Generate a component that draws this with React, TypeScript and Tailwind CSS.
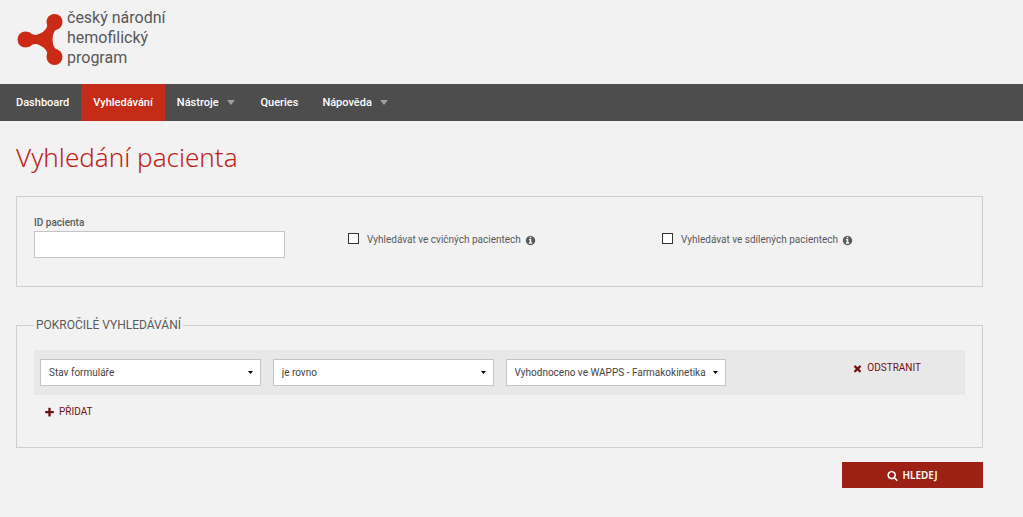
import React, { useState } from 'react';

const ICONS = {
  plus: 'M1600 736v192q0 40-28 68t-68 28h-416v416q0 40-28 68t-68 28h-192q-40 0-68-28t-28-68v-416h-416q-40 0-68-28t-28-68v-192q0-40 28-68t68-28h416v-416q0-40 28-68t68-28h192q40 0 68 28t28 68v416h416q40 0 68 28t28 68z',
  times: 'M1490 1322q0 40-28 68l-136 136q-28 28-68 28t-68-28l-294-294-294 294q-28 28-68 28t-68-28l-136-136q-28-28-28-68t28-68l294-294-294-294q-28-28-28-68t28-68l136-136q28-28 68-28t68 28l294 294 294-294q28-28 68-28t68 28l136 136q28 28 28 68t-28 68l-294 294 294 294q28 28 28 68z',
  search: 'M1216 832q0-185-131.5-316.5t-316.5-131.5-316.5 131.5-131.5 316.5 131.5 316.5 316.5 131.5 316.5-131.5 131.5-316.5zm512 832q0 52-38 90t-90 38q-54 0-90-38l-343-342q-179 124-399 124-143 0-273.5-55.5t-225-150-150-225-55.5-273.5 55.5-273.5 150-225 225-150 273.5-55.5 273.5 55.5 225 150 150 225 55.5 273.5q0 220-124 399l343 343q37 37 37 90z',
  info: 'M1152 1376v-160q0-14-9-23t-23-9h-96v-512q0-14-9-23t-23-9h-320q-14 0-23 9t-9 23v160q0 14 9 23t23 9h96v320h-96q-14 0-23 9t-9 23v160q0 14 9 23t23 9h448q14 0 23-9t9-23zm-128-896v-160q0-14-9-23t-23-9h-192q-14 0-23 9t-9 23v160q0 14 9 23t23 9h192q14 0 23-9t9-23zm640 416q0 209-103 385.5t-279.5 279.5-385.5 103-385.5-103-279.5-279.5-103-385.5 103-385.5 279.5-279.5 385.5-103 385.5 103 279.5 279.5 103 385.5z',
};

interface IconProps {
  name: keyof typeof ICONS;
  className: string;
}

const Icon: React.FC<IconProps> = ({ name, className }) => (
  <svg className={className} viewBox="0 0 1792 1792" fill="currentColor" aria-hidden="true">
    <path d={ICONS[name]} />
  </svg>
);

const Logo: React.FC = () => (
  <a href="#" className="flex items-start gap-1 text-[#58585a]">
    <svg className="mt-[3px] h-14 w-[47px] shrink-0" viewBox="0 0 47 56" fill="#cb2a17" aria-hidden="true">
      <circle cx="9.5" cy="28.5" r="8" />
      <circle cx="38.5" cy="11" r="8" />
      <circle cx="38.5" cy="46" r="8" />
      <path d="M13 21Q18 26 24 22.500Q32 19 31.500 12L44 16Q36.500 19 36.500 28.500Q36.500 38 44 41L31.500 45Q32 38 24 34.500Q18 31 13 36Z" />
    </svg>
    <span className="font-[Roboto,sans-serif] text-base leading-5">
      český národní
      <br />
      hemofilický
      <br />
      program
    </span>
  </a>
);

const navItems = [
  { label: 'Dashboard' },
  { label: 'Vyhledávání', active: true },
  { label: 'Nástroje', menu: true },
  { label: 'Queries' },
  { label: 'Nápověda', menu: true },
];

const NavBar: React.FC = () => (
  <nav className="bg-[#4d4d4d] pl-1">
    <ul className="flex font-[Roboto,sans-serif] text-[11px] font-medium text-white">
      {navItems.map((item) => (
        <li key={item.label}>
          <a
            href="#"
            className={`flex h-[37px] items-center px-3 pt-0.5 ${item.active ? 'bg-[#c52c17]' : ''}`}
          >
            {item.label}
            {item.menu && (
              <svg className="mr-0.5 mb-0.5 ml-2 h-[5px] w-2" viewBox="0 0 8 5" fill="#a0a0a0" aria-hidden="true">
                <path d="M0 0h8L4 5z" />
              </svg>
            )}
          </a>
        </li>
      ))}
    </ul>
  </nav>
);

interface CheckFieldProps {
  id: string;
  label: string;
}

const CheckField: React.FC<CheckFieldProps> = ({ id, label }) => {
  const [checked, setChecked] = useState(false);

  return (
    <div className="flex items-center pt-[17px] font-[Roboto,sans-serif] text-[10px] leading-4 text-[#5a5a5a]">
      <input
        id={id}
        type="checkbox"
        checked={checked}
        onChange={() => setChecked(!checked)}
        className="mr-2 mb-1 size-[11px] appearance-none border border-[#333] bg-white checked:bg-[#333]"
      />
      <label htmlFor={id}>{label}</label>
      <Icon name="info" className="ml-1 size-[11px]" />
    </div>
  );
};

interface FilterSelectProps {
  label: string;
  options: string[];
}

const FilterSelect: React.FC<FilterSelectProps> = ({ label, options }) => {
  const [value, setValue] = useState(options[0]);

  return (
    <div className="relative px-1.5">
      <select
        aria-label={label}
        value={value}
        onChange={(e) => setValue(e.target.value)}
        className="block h-[27px] w-full appearance-none border border-[#c4c4c4] bg-white pr-4 pl-2 font-[Roboto,sans-serif] text-[10px] text-[#444]"
      >
        {options.map((option) => (
          <option key={option}>{option}</option>
        ))}
      </select>
      <svg
        className="pointer-events-none absolute top-3 right-[14px] h-[3px] w-[5px]"
        viewBox="0 0 5 3"
        aria-hidden="true"
      >
        <path d="M0 0h5L2.5 3z" />
      </svg>
    </div>
  );
};

const App: React.FC = () => {
  const [patientId, setPatientId] = useState('');

  return (
    <div className="min-h-screen bg-[#f2f2f2] font-['Noto_Sans','Open_Sans',sans-serif] text-[#5a5a5a]">
      <header className="h-[84px] px-4 pt-2">
        <Logo />
      </header>
      <NavBar />

      <main className="pr-10 pb-7 pl-4">
        <h1 className="pt-[18px] text-[26px] leading-9 font-light text-[#c02418]">Vyhledání pacienta</h1>

        <form onSubmit={(e) => e.preventDefault()}>
          <section className="mt-[21px] grid h-[91px] grid-cols-3 border border-[#cfcfcf] pt-[18px] pr-1.5 pl-[17px]">
            <div>
              <label
                htmlFor="patient-id"
                className="block font-[Roboto,sans-serif] text-[10px] leading-4 font-medium"
              >
                ID pacienta
              </label>
              <input
                id="patient-id"
                type="text"
                value={patientId}
                onChange={(e) => setPatientId(e.target.value)}
                className="block h-[27px] w-4/5 border border-[#c4c4c4] bg-white px-2 text-[11px]"
              />
            </div>
            <div>
              <CheckField id="practice" label="Vyhledávat ve cvičných pacientech" />
            </div>
            <div>
              <CheckField id="shared" label="Vyhledávat ve sdílených pacientech" />
            </div>
          </section>

          <fieldset className="mt-7 border border-[#cfcfcf] px-[17px] pb-[26px]">
            <legend className="px-0.5 font-[Roboto,sans-serif] text-xs leading-5">POKROČILÉ VYHLEDÁVÁNÍ</legend>
            <div className="mt-[15px] grid h-[45px] grid-cols-4 bg-[#e8e8e8] pt-[9px]">
              <FilterSelect label="Pole" options={['Stav formuláře']} />
              <FilterSelect label="Operátor" options={['je rovno']} />
              <FilterSelect label="Hodnota" options={['Vyhodnoceno ve WAPPS - Farmakokinetika']} />
              <div className="flex items-start justify-end pr-11">
                <button
                  type="button"
                  className="flex items-center gap-1 font-[Roboto,sans-serif] text-[10px] leading-[18px] text-[#701010]"
                >
                  <Icon name="times" className="size-[11px]" />
                  ODSTRANIT
                </button>
              </div>
            </div>
            <button
              type="button"
              className="mt-2 ml-[10px] flex items-center gap-1 font-[Roboto,sans-serif] text-[10px] leading-[18px] text-[#701010]"
            >
              <Icon name="plus" className="size-[11px]" />
              PŘIDAT
            </button>
          </fieldset>

          <div className="mt-[14px] flex justify-end">
            <button
              type="submit"
              className="flex h-[26px] w-[141px] items-center justify-center gap-1 bg-[#9c2013] text-[10px] font-semibold text-white"
            >
              <Icon name="search" className="size-[11px]" />
              HLEDEJ
            </button>
          </div>
        </form>
      </main>
    </div>
  );
};

export default App;
